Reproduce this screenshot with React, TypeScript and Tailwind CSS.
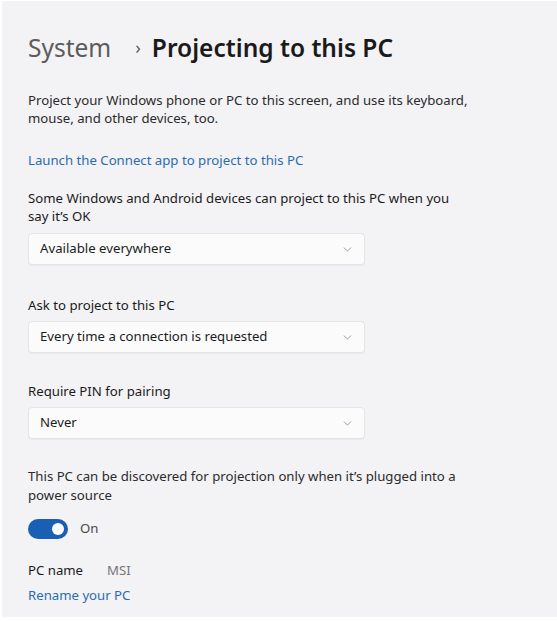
import { ChevronDown } from 'lucide-react';

const font = { fontFamily: '"Segoe UI", "Noto Sans", "Open Sans", sans-serif' };

function Dropdown({ value }: { value: string }) {
  return (
    <div className="w-[337px] h-[32px] bg-[#fbfbfb] border border-[#e5e5e5] rounded-[4px] shadow-[0_1px_1px_rgba(0,0,0,0.04)] flex items-center justify-between pl-[11px] pr-[10px]">
      <span className="text-[13.2px] text-[#1b1b1b]">{value}</span>
      <ChevronDown className="w-[13px] h-[13px] text-[#8a8a8a]" strokeWidth={1.5} />
    </div>
  );
}

export default function App() {
  return (
    <div className="w-[557px] h-[621px] bg-white pl-[2px] pt-[1px] pb-[4px]" style={font}>
      <div className="h-full bg-[#f3f2f5] pl-[26px] pt-[27px]">
        {/* Header */}
        <div className="flex items-center h-[40px] text-[24.5px] leading-none">
          <span className="text-[#5c5c5c]">System</span>
          <span className="text-[#5c5c5c] text-[18px] ml-[24px] mr-[11px] mt-[-2px]">›</span>
          <span className="text-[#1a1a1a] font-semibold">Projecting to this PC</span>
        </div>

        <div className="mt-[23px] text-[13.2px] leading-[18px] text-[#2b2b2b] w-[470px]">
          Project your Windows phone or PC to this screen, and use its keyboard, mouse, and other devices, too.
        </div>

        <div className="mt-[24px] text-[13.2px] leading-[18px] text-[#2a6cb0]">
          Launch the Connect app to project to this PC
        </div>

        <div className="mt-[20px] text-[13.2px] leading-[18px] text-[#1b1b1b] w-[430px]">
          Some Windows and Android devices can project to this PC when you say it’s OK
        </div>
        <div className="mt-[8px]">
          <Dropdown value="Available everywhere" />
        </div>

        <div className="mt-[31px] text-[13.2px] leading-[18px] text-[#1b1b1b]">Ask to project to this PC</div>
        <div className="mt-[7px]">
          <Dropdown value="Every time a connection is requested" />
        </div>

        <div className="mt-[29px] text-[13.2px] leading-[18px] text-[#1b1b1b]">Require PIN for pairing</div>
        <div className="mt-[7px]">
          <Dropdown value="Never" />
        </div>

        <div className="mt-[28px] text-[13.2px] leading-[19px] text-[#2b2b2b] w-[430px]">
          This PC can be discovered for projection only when it’s plugged into a power source
        </div>

        <div className="mt-[14px] flex items-center gap-[12px]">
          <div className="w-[40px] h-[20px] rounded-full bg-[#1a5fb4] flex items-center justify-end pr-[4px]">
            <div className="w-[12px] h-[12px] rounded-full bg-white" />
          </div>
          <span className="text-[13.2px] text-[#4a4a4a]">On</span>
        </div>

        <div className="mt-[22px] flex items-center text-[13.2px] leading-[18px]">
          <span className="text-[#1b1b1b] w-[79px]">PC name</span>
          <span className="text-[#777777]">MSI</span>
        </div>
        <div className="mt-[7px] text-[13.2px] leading-[18px] text-[#2a6cb0]">Rename your PC</div>
      </div>
    </div>
  );
}
